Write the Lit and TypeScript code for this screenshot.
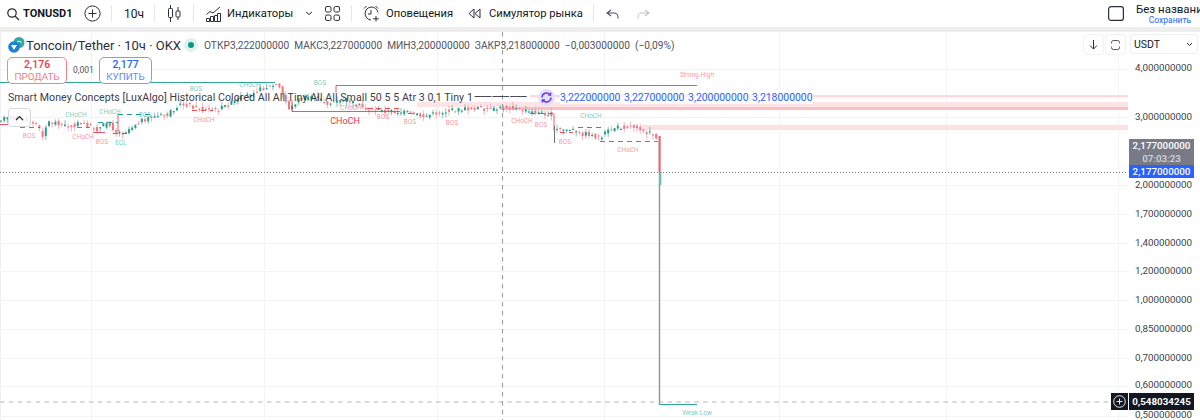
import { LitElement, html, css, svg } from "lit";
import { customElement } from "lit/decorators.js";

const W = 1128, H = 388, TOP = 32;

const pathPts: [number, number][] = [[0,119],[20,118],[30,122],[40,125],[44,137],[50,122],[60,123],[70,127],[80,124],[90,125],[100,130],[110,122],[118,132],[125,133],[130,130],[140,122],[150,118],[170,115],[180,105],[190,105],[205,110],[220,110],[240,100],[255,92],[270,87],[280,85],[286,98],[292,110],[300,100],[315,96],[330,104],[350,100],[370,110],[400,112],[410,113],[425,117],[440,113],[460,110],[480,108],[495,110],[510,107],[530,112],[552,114]];
const path2: [number, number][] = [[556,130],[566,130],[575,130],[580,134],[590,134],[600,138],[605,135],[615,128],[630,127],[640,127],[645,130],[655,135],[657,137]];

function interp(pts: [number, number][], x: number) {
  for (let i = 1; i < pts.length; i++) {
    if (x <= pts[i][0]) {
      const [a, b] = pts[i - 1], [c, d] = pts[i];
      return b + ((d - b) * (x - a)) / (c - a);
    }
  }
  return pts[pts.length - 1][1];
}

let seed = 17;
const rnd = () => ((seed = (seed * 9301 + 49297) % 233280) / 233280);

interface Candle { x: number; o: number; c: number; hi: number; lo: number }
function build(pts: [number, number][], from: number, to: number) {
  const out: Candle[] = [];
  for (let x = from; x < to; x += 3.2) {
    const o = interp(pts, x) + (rnd() - 0.5) * 4.5;
    const c = interp(pts, x + 3.2) + (rnd() - 0.5) * 4.5;
    const hi = Math.min(o, c) - rnd() * 4.5;
    const lo = Math.max(o, c) + rnd() * 4.5;
    out.push({ x, o, c, hi, lo });
  }
  return out;
}
const candles = [...build(pathPts, 0, 552), ...build(path2, 556, 657)];

const TEAL = "#089981", RED = "#f23645";

const labels: [string, number, number, string, number?][] = [
  ["BOS", 29, 138, RED], ["CHoCH", 83, 139, RED], ["BOS", 102, 144, RED], ["CHoCH", 204, 122, RED],
  ["EQL", 121, 145, TEAL], ["CHoCH", 76, 117, TEAL], ["CHoCH", 110, 114, TEAL], ["BOS", 196, 91, TEAL],
  ["BOS", 145, 117, TEAL], ["CHoCH", 250, 87, TEAL], ["BOS", 320, 85, TEAL], ["CHoCH", 351, 110, RED],
  ["BOS", 383, 119, RED], ["BOS", 410, 124, RED], ["BOS", 452, 125, RED], ["CHoCH", 522, 123, RED],
  ["BOS", 541, 127, RED], ["BOS", 565, 144, RED], ["CHoCH", 591, 118, TEAL], ["CHoCH", 628, 152, RED],
  ["Strong High", 697, 77, RED], ["Weak Low", 697, 415, TEAL], ["CHoCH", 345, 124, RED, 9],
];

const solid: [number, number, number, number, string][] = [
  [0, 82, 275, 82, TEAL], [336, 85, 697, 85, RED], [336, 85, 336, 92, RED], [292, 100, 292, 111, RED],
  [292, 111, 400, 111, RED], [0, 124, 9, 124, RED], [93, 132, 105, 132, RED], [118, 113, 118, 131, RED],
  [554, 113, 554, 130, RED], [659, 404, 697, 404, TEAL],
];
const dashed: [number, number, number, number, string][] = [
  [20, 127, 40, 127, RED], [77, 127, 90, 127, RED], [98, 122, 118, 122, TEAL], [118, 114, 150, 114, TEAL],
  [113, 133, 127, 133, TEAL], [192, 110, 213, 110, RED], [367, 108, 400, 108, RED], [408, 113, 418, 113, RED],
  [530, 113, 553, 113, RED], [560, 132, 573, 132, RED], [578, 127, 603, 127, TEAL], [600, 141, 658, 141, RED],
];

const gridY = [69, 117, 185, 214, 243, 271, 300, 329, 358, 386, 416];
const gridX = [91, 264, 437, 604, 779, 946, 1118];

const bands: [number, number, number, number, string][] = [
  [530, 95, 598, 2.5, "#fcd9dc"], [417, 102, 711, 5, "#fde4e6"], [500, 107, 628, 3, "#fbc0c4"], [640, 125, 488, 5, "#fde0e2"],
];

const axis: [string, number][] = [
  ["4,000000000", 68], ["3,000000000", 117], ["2,000000000", 185], ["1,700000000", 214], ["1,400000000", 243],
  ["1,200000000", 271], ["1,000000000", 300], ["0,850000000", 329], ["0,700000000", 358], ["0,600000000", 385], ["0,500000000", 415],
];

@customElement("app-root")
export class AppRoot extends LitElement {
  static styles = css`
    :host { display: block; width: 1200px; height: 420px; overflow: hidden; background: #fff; font-family: Roboto, "Noto Sans", sans-serif; color: #131722; }
    .toolbar { display: flex; align-items: center; height: 27px; font-size: 11.2px; padding-left: 6px; box-sizing: border-box; white-space: nowrap; }
    .tb { display: flex; align-items: center; flex: none; }
    .tb svg { display: block; flex: none; }
    .sym { font-weight: 700; font-size: 11px; width: 48px; overflow: hidden; margin-left: 3px; }
    .sep { width: 1px; height: 17px; background: #e6e7ea; flex: none; }
    .spacer { flex: 1; }
    .doc { display: flex; flex-direction: column; align-items: center; width: 64px; overflow: hidden; margin-left: 12px; align-self: flex-start; padding-top: 3px; }
    .doc b { font-weight: 400; font-size: 11.5px; line-height: 13px; white-space: nowrap; align-self: flex-start; }
    .doc a { font-size: 8.5px; color: #2962ff; line-height: 9px; margin-left: 4px; }
    .gutter { height: 5px; background: #eeeeee; }
    .row { display: flex; height: 388px; border-left: 1px solid #f0f0f0; }
    .canvas { position: relative; width: 1127px; height: 388px; flex: none; }
    .canvas > svg { position: absolute; left: -1px; top: 0; display: block; }
    .axis { position: relative; flex: 1; }
    .tick { position: absolute; left: 7px; font-size: 9.8px; line-height: 14px; color: #3b3f4a; white-space: nowrap; }
    .ticker { position: absolute; left: 1px; width: 65px; color: #fff; font-size: 9.8px; line-height: 13px; text-align: center; font-weight: 500; }
    .ticker.grey { top: 107px; height: 26px; background: #787b86; }
    .ticker.grey span { display: block; color: #d6d8de; }
    .ticker.blue { top: 133px; height: 13px; background: #2962ff; }
    .ticker.dark { top: 361px; height: 17px; line-height: 17px; background: #131722; font-weight: 700; }
    .plus { position: absolute; left: 1110px; top: 361px; width: 17px; height: 17px; background: #131722; display: flex; align-items: center; justify-content: center; }
    .select { position: absolute; left: 2px; top: 2px; width: 68px; height: 20px; border: 1px solid #eeeff2; border-radius: 3px; box-sizing: border-box; display: flex; align-items: center; justify-content: space-between; padding: 0 4px 0 3px; font-size: 10.5px; background: #fff; }
    .legend { position: absolute; left: 7px; top: 5px; display: flex; align-items: center; white-space: nowrap; height: 16px; }
    .title { font-size: 13px; margin-left: 1px; color: #2a2e39; width: 151px; }
    .dot { width: 14px; height: 14px; border-radius: 50%; background: #dff2ee; display: flex; align-items: center; justify-content: center; margin: 0 6px 0 7px; flex: none; }
    .dot i { width: 6px; height: 6px; border-radius: 50%; background: #089981; }
    .ohlc { font-size: 10.2px; color: #50535e; word-spacing: 2.5px; }
    .tbtn { position: absolute; top: 2px; width: 19px; height: 19px; border: 1px solid #f0f1f3; border-radius: 4px; display: flex; align-items: center; justify-content: center; background: #fff; }
    .trade { position: absolute; top: 25px; height: 27px; box-sizing: border-box; border-radius: 5px; border: 1px solid; background: #fff; display: flex; flex-direction: column; align-items: center; justify-content: center; line-height: 12px; }
    .trade b { font-weight: 500; font-size: 10.5px; }
    .trade span { font-size: 9.8px; }
    .sell { left: 6px; width: 60px; border-color: #f7828a; color: #f23645; }
    .sell span { color: #f77c80; }
    .buy { left: 98px; width: 53px; border-color: #7a9dff; color: #2962ff; }
    .buy span { color: #5b8cff; }
    .spread { position: absolute; left: 72px; top: 33px; font-size: 8.5px; line-height: 11px; color: #50535e; }
    .ind { position: absolute; left: 7px; top: 57px; height: 16px; display: flex; align-items: center; white-space: nowrap; font-size: 10.6px; color: #3a3d47; }
    .ind .txt { width: 464px; letter-spacing: .07px; }
    .ind .vals { color: #2962ff; word-spacing: 1px; margin-left: 5px; background: rgba(255,255,255,.75); font-size: 10.4px; }
    .ind .halo { width: 17px; height: 17px; border-radius: 50%; background: #e6e0fb; display: flex; align-items: center; justify-content: center; margin-left: 3px; flex: none; }
    .ind .dash { letter-spacing: -1px; margin-left: 2px; color: #3a3d47; width: 61px; font-size: 8.5px; overflow: hidden; font-weight: 500; }
    .collapse { position: absolute; left: 7px; top: 76px; width: 23px; height: 19px; box-sizing: border-box; border: 1px solid #d8dae0; border-radius: 3px; background: rgba(255,255,255,.75); display: flex; align-items: center; justify-content: center; }
  `;

  chart() {
    return html`<svg width=${W} height=${H} viewBox="0 ${TOP} ${W} ${H}">
      ${gridY.map((y) => svg`<line x1="0" x2=${W} y1=${y + 0.5} y2=${y + 0.5} stroke="#f3f4f6"/>`)}
      ${gridX.map((x) => svg`<line y1=${TOP} y2="420" x1=${x + 0.5} x2=${x + 0.5} stroke="#f3f4f6"/>`)}
      ${bands.map(([x, y, w, h, c]) => svg`<rect x=${x} y=${y} width=${w} height=${h} fill=${c}/>`)}
      ${candles.map((k) => {
        const up = k.c > k.o;
        return svg`<line x1=${k.x + 1} x2=${k.x + 1} y1=${k.hi} y2=${k.lo} stroke=${up ? "#f7a0a6" : "#5fb8a8"} stroke-width=".8"/>
          <rect x=${k.x} y=${Math.min(k.o, k.c)} width="2" height=${Math.max(1, Math.abs(k.c - k.o))} fill=${up ? "#f0767f" : "#2c9c8a"}/>`;
      })}
      <line x1="554.5" x2="554.5" y1="126" y2="143" stroke="#6f737e"/>
      <line x1="659.5" x2="659.5" y1="136" y2="404" stroke="#8f929b" stroke-width="1.4"/>
      <rect x="658.6" y="136" width="2" height="36" fill="#f2636c"/>
      <rect x="659.4" y="172" width="2" height="13" fill="#6cc3b5"/>
      ${solid.map(([a, b, c, d, col]) => svg`<line x1=${a} y1=${b + 0.5} x2=${c} y2=${d + 0.5} stroke=${col} stroke-opacity=".85"/>`)}
      ${dashed.map(([a, b, c, d, col]) => svg`<line x1=${a} y1=${b + 0.5} x2=${c} y2=${d + 0.5} stroke=${col} stroke-opacity=".9" stroke-dasharray="5 4"/>`)}
      ${labels.map(([t, x, y, col, s]) => svg`<text x=${x} y=${y} text-anchor="middle" fill=${col} fill-opacity=${s ? 1 : 0.55} font-size=${s || 6.5} font-family="Roboto, sans-serif">${t}</text>`)}
      <line x1="0" x2=${W} y1="172.5" y2="172.5" stroke="#787b86" stroke-dasharray="1 2"/>
      <line x1="0" x2="1111" y1="402" y2="402" stroke="#b2b5be" stroke-width="1.2" stroke-dasharray="4.5 4.4"/>
      <line x1="502.5" x2="502.5" y1=${TOP} y2="420" stroke="#9a9da6" stroke-width="1.1" stroke-dasharray="4.5 4.5"/>
    </svg>`;
  }

  render() {
    const i = "#2a2e39";
    return html`
      <div class="toolbar">
        <div class="tb">
          <svg width="14" height="14" viewBox="0 0 14 14" fill="none" stroke=${i} stroke-width="1.3"><circle cx="6" cy="6" r="4.2"/><path d="M9 9l4 4"/></svg>
          <span class="sym">TONUSD1</span>
        </div>
        <div class="tb" style="margin-left:13px"><svg width="17" height="17" viewBox="0 0 17 17" fill="none" stroke=${i}><circle cx="8.5" cy="8.5" r="7.6"/><path d="M8.5 4.5v8M4.5 8.5h8"/></svg></div>
        <div class="tb" style="margin-left:10px"><div class="sep"></div></div>
        <div class="tb" style="margin-left:12px;width:30px;font-size:12px">10ч</div>
        <div class="sep"></div>
        <div class="tb" style="margin-left:13px"><svg width="13" height="17" viewBox="0 0 13 17" fill="none" stroke=${i}><rect x=".5" y="3.5" width="4" height="9" rx=".8"/><path d="M2.5 0v3.500M2.500 12.500V17M10 2v4M10 12v3"/><rect x="8" y="6" width="4" height="6" rx=".8"/></svg></div>
        <div class="tb" style="margin-left:12px"><div class="sep"></div></div>
        <div class="tb" style="margin-left:12px"><svg width="15" height="16" viewBox="0 0 15 16" fill="none" stroke=${i}><path d="M.5 8.500l3.500-3 3 1.500 7-6"/><path d="M.5 15.500v-3h3v3zM4.500 15.500v-5h3v5zM8.500 15.500v-6h3v6zM11.500 15.500v-8h3v8z"/></svg></div>
        <div class="tb" style="margin-left:6px;width:78px">Индикаторы</div>
        <div class="tb"><svg width="8" height="5" viewBox="0 0 8 5" fill="none" stroke=${i}><path d="M1 1l3 2.500L7 1"/></svg></div>
        <div class="tb" style="margin-left:12px"><svg width="15" height="15" viewBox="0 0 15 15" fill="none" stroke=${i}><rect x=".5" y=".5" width="5.500" height="5.500" rx="1.500"/><rect x="9" y=".5" width="5.500" height="5.500" rx="1.500"/><rect x=".5" y="9" width="5.500" height="5.500" rx="1.500"/><rect x="9" y="9" width="5.500" height="5.500" rx="1.500"/></svg></div>
        <div class="tb" style="margin-left:11px"><div class="sep"></div></div>
        <div class="tb" style="margin-left:11px"><svg width="17" height="17" viewBox="0 0 17 17" fill="none" stroke=${i}><path d="M15 7.500A6.500 6.500 0 1 0 8 15M1 3.500L3.500 1M12.500 1L15 3.500M8 5v4H5M13 11v5.500M10.200 13.800h5.600"/></svg></div>
        <div class="tb" style="margin-left:6px;width:77px">Оповещения</div>
        <div class="tb" style="margin-left:5px"><svg width="13" height="11" viewBox="0 0 13 11" fill="none" stroke=${i}><path d="M6 1L1 5.500 6 10zM12 1L7 5.500 12 10z"/></svg></div>
        <div class="tb" style="margin-left:8px;width:104px">Симулятор рынка</div>
        <div class="sep"></div>
        <div class="tb" style="margin-left:12px"><svg width="13" height="10" viewBox="0 0 13 10" fill="none" stroke="#50535e" stroke-width="1.100"><path d="M5 1L1 4l4 3M1 4h7a4 4 0 0 1 4 4v1.500"/></svg></div>
        <div class="tb" style="margin-left:18px"><svg width="13" height="10" viewBox="0 0 13 10" fill="none" stroke="#c1c4cc" stroke-width="1.100"><path d="M8 1l4 3-4 3M12 4H5a4 4 0 0 0-4 4v1.500"/></svg></div>
        <div class="spacer"></div>
        <div class="tb"><svg width="16" height="15" viewBox="0 0 16 15" fill="none" stroke=${i} stroke-width="1.200"><rect x=".6" y=".6" width="14.800" height="13.800" rx="2.500"/></svg></div>
        <div class="doc"><b>Без названия</b><a>Сохранить</a></div>
      </div>
      <div class="gutter"></div>
      <div class="row">
        <div class="canvas">
          ${this.chart()}
          <div class="legend">
            <svg width="17" height="16" viewBox="0 0 17 16"><circle cx="11" cy="5.500" r="5.500" fill="#2fa8a0"/><path d="M8 6a3.500 3.500 0 0 1 6 0" stroke="#fff" fill="none"/><circle cx="6" cy="10" r="5.800" fill="#1f7fd0"/><path d="M3 8h6l-3 5z" fill="#fff"/></svg>
            <span class="title">Toncoin/Tether · 10ч · OKX</span>
            <span class="dot"><i></i></span>
            <span class="ohlc">ОТКР3,222000000 МАКС3,227000000 МИН3,200000000 ЗАКР3,218000000 −0,003000000 (−0,09%)</span>
          </div>
          <div class="tbtn" style="left:1082px"><svg width="9" height="10" viewBox="0 0 9 10" fill="none" stroke=${i}><path d="M4.500 0v9M1 5.500l3.500 3.500L8 5.500"/></svg></div>
          <div class="tbtn" style="left:1104px"><svg width="11" height="10" viewBox="0 0 11 10" fill="none" stroke="#50535e"><path d="M1.500 3.500v-1a2 2 0 0 1 2-2h4a2 2 0 0 1 2 2v1M1.500 6.500v1a2 2 0 0 0 2 2h4a2 2 0 0 0 2-2v-1"/></svg></div>
          <div class="trade sell"><b>2,176</b><span>ПРОДАТЬ</span></div>
          <div class="spread">0,001</div>
          <div class="trade buy"><b>2,177</b><span>КУПИТЬ</span></div>
          <div class="ind">
            <span class="txt">Smart Money Concepts [LuxAlgo] Historical Colored All All Tiny All All Small 50 5 5 Atr 3 0,1 Tiny 1</span>
            <span class="dash">——— ——— ———</span>
            <span class="halo"><svg width="11" height="11" viewBox="0 0 11 11" fill="none" stroke="#6a35e8" stroke-width="1.400"><path d="M1 5.500a4.500 4.500 0 0 1 8-2.800M10 5.500a4.500 4.500 0 0 1-8 2.800"/><path d="M9.600 .5v2.600H7M1.400 10.500V7.900H4"/></svg></span>
            <span class="vals">3,222000000 3,227000000 3,200000000 3,218000000</span>
          </div>
          <div class="collapse"><svg width="9" height="6" viewBox="0 0 9 6" fill="none" stroke=${i} stroke-width="1.200"><path d="M1 5l3.500-3.500L8 5"/></svg></div>
          <div class="plus"><svg width="13" height="13" viewBox="0 0 13 13" fill="none" stroke="#fff" stroke-width=".9"><circle cx="6.500" cy="6.500" r="5.800"/><path d="M6.500 3.500v6M3.500 6.500h6"/></svg></div>
        </div>
        <div class="axis">
          ${axis.map(([t, y]) => html`<div class="tick" style="top:${y - TOP - 7}px">${t}</div>`)}
          <div class="select"><span>USDT</span><svg width="7" height="5" viewBox="0 0 7 5" fill="none" stroke=${i}><path d="M1 1l2.500 2.500L6 1"/></svg></div>
          <div class="ticker grey">2,177000000<span>07:03:23</span></div>
          <div class="ticker blue">2,177000000</div>
          <div class="ticker dark">0,548034245</div>
        </div>
      </div>
    `;
  }
}
